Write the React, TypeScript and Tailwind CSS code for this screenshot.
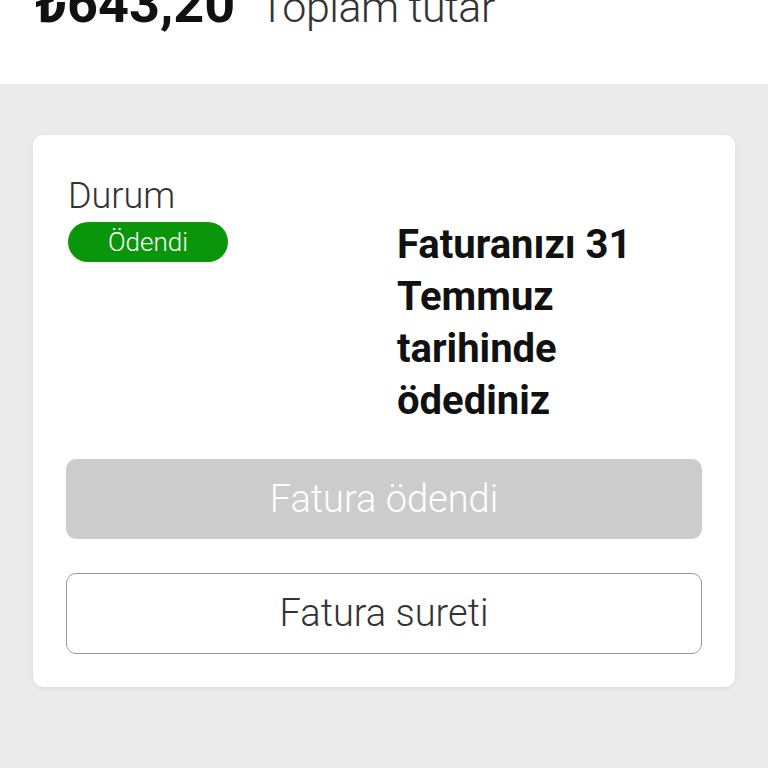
import React from 'react';

export default function App() {
  return (
    <div className="flex min-h-[768px] w-[768px] flex-col bg-[#ebebeb] font-['Roboto',sans-serif]">
      <div className="h-[84px] overflow-hidden bg-white px-[35px]">
        <div className="-mt-[23px] flex items-baseline gap-[24px]">
          <span className="text-[54px] font-bold leading-none text-[#111]">₺643,20</span>
          <span className="text-[43px] font-light leading-none tracking-[-0.5px] text-[#333]">Toplam tutar</span>
        </div>
      </div>

      <div className="px-[33px] pt-[51px]">
        <div className="rounded-[10px] bg-white px-[33px] pb-[33px] pt-[40px] shadow-[0_1px_4px_rgba(0,0,0,0.08)]">
          <div className="grid grid-cols-[1fr_1fr] gap-6 pl-[2px]">
            <div className="flex flex-col items-start">
              <span className="text-[36px] font-light leading-[42px] text-[#333]">Durum</span>
              <span className="mt-[5px] flex h-[40px] w-[160px] items-center justify-center rounded-full bg-[#0a960a] text-[26px] font-light text-white">
                Ödendi
              </span>
            </div>
            <div className="pt-[44px] text-[40px] font-bold leading-[52px] text-[#111]">
              Faturanızı 31 Temmuz tarihinde ödediniz
            </div>
          </div>

          <button className="mt-[32px] flex h-[80px] w-full items-center justify-center rounded-[10px] bg-[#cccccc] text-[38px] font-light text-white">
            Fatura ödendi
          </button>
          <button className="mt-[34px] flex h-[81px] w-full items-center justify-center rounded-[10px] border-[1.5px] border-[#9a9a9a] bg-white text-[38px] font-light text-[#333]">
            Fatura sureti
          </button>
        </div>
      </div>
    </div>
  );
}
